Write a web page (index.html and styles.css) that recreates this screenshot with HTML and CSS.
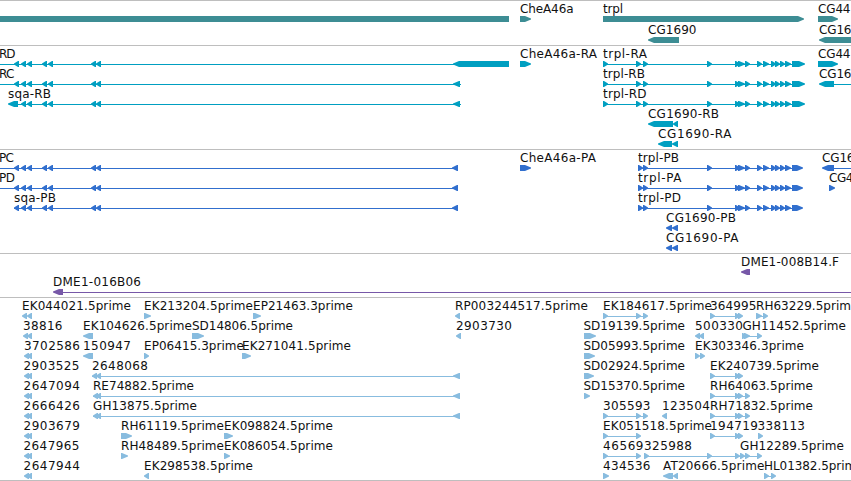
FILE: index.html
```html
<!DOCTYPE html>
<html lang="en">
<head>
  <meta charset="UTF-8">
  <meta name="viewport" content="width=device-width, initial-scale=1.0">
  <title>Genome Browser</title>
  <link rel="stylesheet" href="styles.css">
</head>
<body>
  <main class="browser">
    <section class="track genes"><svg id="genes"></svg></section>
    <section class="track transcripts"><svg id="transcripts"></svg></section>
    <section class="track proteins"><svg id="proteins"></svg></section>
    <section class="track clones"><svg id="clones"></svg></section>
    <section class="track ests"><svg id="ests"></svg></section>
  </main>
  <script src="tracks.js"></script>
</body>
</html>
```
FILE: styles.css
```css
* {
  box-sizing: border-box;
}

body {
  margin: 0;
  background: #fff;
  overflow: hidden;
}

.browser {
  display: flex;
  flex-direction: column;
  width: 851px;
  border-bottom: 1px solid #bebebe;
}

.track {
  border-top: 1px solid #bebebe;
}

.track svg {
  display: block;
  width: 100%;
  height: 100%;
  overflow: hidden;
}

.track text {
  font-family: "DejaVu Sans", sans-serif;
  font-size: 12px;
  fill: #111;
}

.track path,
.track rect {
  fill: currentColor;
}

.track rect {
  shape-rendering: crispEdges;
}

.genes {
  height: 45px;
  color: #3d8d94;
}

.transcripts {
  height: 104px;
  color: #009fc1;
}

.proteins {
  height: 104px;
  color: #316fce;
}

.clones {
  height: 44px;
  color: #7758a8;
}

.ests {
  height: 183px;
  color: #88bcdf;
}
```
FILE: tracks.js
```js
const SVG = 'http://www.w3.org/2000/svg';

// exons shared by several features
const sqaCds = [[21, 26], [27, 32], [42, 47], [48, 53], [91, 96], [96, 101]];
const trplTail = [[707, 712], [735, 740], [738, 745], [745, 750], [757, 762], [763, 769],
  [771, 776], [775, 780], [780, 785], [785, 791]];
const trplRna = [[603, 608], [636, 641], [643, 648], ...trplTail, [792, 805]];
const trplCds = [[638, 643], [643, 648], ...trplTail, [792, 803]];
const pair = [[24, 29], [27, 32]];
const estMid = [[710, 715], [735, 740], [738, 743]];

// [label, label start, label end, strand, exons, line start, line end]
const tracks = {
  genes: { pitch: 21, rows: [
    [
      ['', 0, 0, 0, [[0, 509]]],
      ['CheA46a', 520, 573, 1, [[520, 531]]],
      ['trpl', 603, 622.5, 1, [[603, 804]]],
      ['CG44', 818, 850, 1, [[818, 838]]]
    ],
    [
      ['CG1690', 648, 696, -1, [[648, 679]]],
      ['CG16', 819, 851, -1, [[819, 856]]]
    ]
  ] },
  transcripts: { pitch: 20, rows: [
    [
      ['RD', -1, 15, -1, [[14, 19], ...sqaCds, [453, 509]], 0, 460],
      ['CheA46a-RA', 520, 596.5, 1, [[520, 531]]],
      ['trpl-RA', 603, 646.5, 1, trplRna, 603, 800],
      ['CG44', 818, 850, 1, [[818, 838]]]
    ],
    [
      ['RC', -1, 14, -1, [[14, 19], ...sqaCds, [453, 460]], 0, 461],
      ['trpl-RB', 603, 644.5, 1, trplRna, 603, 800],
      ['CG16', 819, 851, -1, [[819, 834]], 830, 851]
    ],
    [
      ['sqa-RB', 8, 50.5, -1, [[8, 18], ...sqaCds, [453, 460]], 12, 461],
      ['trpl-RD', 603, 646, 1, trplRna, 603, 800]
    ],
    [['CG1690-RB', 648, 718.5, -1, [[648, 673], [673, 678]]]],
    [['CG1690-RA', 658, 731, -1, [[658, 672], [672, 678]]]]
  ] },
  proteins: { pitch: 20, rows: [
    [
      ['PC', -1, 13.5, -1, [[14, 19], ...sqaCds, [452, 458]], 0, 458],
      ['CheA46a-PA', 520, 595.5, 1, [[520, 531]]],
      ['trpl-PB', 638, 678.5, 1, trplCds, 638, 800],
      ['CG16', 822, 854, -1, [[822, 834]], 830, 851]
    ],
    [
      ['PD', -1, 14.5, -1, [[14, 19], ...sqaCds, [452, 458]], 0, 458],
      ['trpl-PA', 638, 681, 1, trplCds, 638, 800],
      ['CG4', 829, 853, 1, [[829, 835]]]
    ],
    [
      ['sqa-PB', 14, 55.5, -1, [[14, 19], ...sqaCds, [452, 458]], 14, 458],
      ['trpl-PD', 638, 680.5, 1, trplCds, 638, 800]
    ],
    [['CG1690-PB', 666, 735.5, -1, [[666, 672], [672, 678]]]],
    [['CG1690-PA', 666, 738, -1, [[666, 672], [672, 678]]]]
  ] },
  clones: { pitch: 20, rows: [
    [['DME1-008B14.F', 741, 838.5, -1, [[741, 750]]]],
    [['DME1-016B06', 53, 140.5, -1, [[53, 63]], 60, 851]]
  ] },
  ests: { pitch: 20, rows: [
    [
      ['EK044021.5prime', 22, 130.5, -1, [[22, 27], [27, 32]]],
      ['EK213204.5prime', 144, 252.5, 1, [[144, 151]]],
      ['EP21463.3prime', 253, 352.5, 1, [[253, 261]]],
      ['RP003244517.5prime', 455, 587.5, -1, [[455, 460]]],
      ['EK184617.5prime', 603, 711.5, 1, [[603, 608], [636, 641], [643, 648]], 603, 645],
      ['364995', 710, 756, 1, estMid, 710, 740],
      ['RH63229.5prime', 756, 858, 1, [[756, 762], [763, 768]], 756, 765]
    ],
    [
      ['38816', 23, 62, -1, [[23, 28], [27, 32]]],
      ['EK104626.5prime', 83, 191.5, -1, [[83, 93]]],
      ['SD14806.5prime', 192, 292.5, 1, [[192, 204]]],
      ['2903730', 456, 511.5, -1, [[456, 461]]],
      ['SD19139.5prime', 583.5, 684.5, 1, [[584, 596]]],
      ['500330', 695, 742.5, -1, [[695, 700], [699, 704]]],
      ['GH11452.5prime', 742.5, 845.5, 1, [[742, 747], [744, 750], [757, 762]], 742, 760]
    ],
    [
      ['3702586', 24, 79.5, -1, pair],
      ['150947', 83, 130.5, -1, [[83, 93]]],
      ['EP06415.3prime', 144, 243.5, 1, [[144, 149]]],
      ['EK271041.5prime', 242, 350.5, 1, [[242, 251]]],
      ['SD05993.5prime', 583.5, 684.5, 1, [[584, 595]]],
      ['EK303346.3prime', 695, 803.5, 1, [[695, 700], [700, 705]]]
    ],
    [
      ['2903525', 23.5, 79, -1, pair],
      ['2648068', 92, 147.5, -1, [[92, 97], [96, 101], [453, 460]], 92, 460],
      ['SD02924.5prime', 583.5, 684.5, 1, [[584, 594]]],
      ['EK240739.5prime', 710, 818.5, 1, estMid, 710, 740]
    ],
    [
      ['2647094', 23.5, 79.5, -1, pair],
      ['RE74882.5prime', 93, 193.5, -1, [[93, 98], [96, 101], [453, 460]], 93, 460],
      ['SD15370.5prime', 583.5, 684.5, 1, [[584, 590]]],
      ['RH64063.5prime', 710, 812.5, 1, [...estMid, [745, 750]], 710, 748]
    ],
    [
      ['2666426', 23.5, 79.5, -1, pair],
      ['GH13875.5prime', 93, 196.5, -1, [[93, 98], [96, 101], [453, 460]], 93, 460],
      ['305593', 603, 650, 1, [[603, 608], [636, 641], [643, 648]], 603, 645],
      ['123504', 662, 709.5, -1, [[662, 667]]],
      ['RH71832.5prime', 710, 812.5, 1, [...estMid, [745, 750]], 710, 748]
    ],
    [
      ['2903679', 23.5, 79.5, -1, pair],
      ['RH61119.5prime', 121, 223.5, 1, [[121, 132]]],
      ['EK098824.5prime', 224, 332.5, 1, [[224, 233]]],
      ['EK051518.5prime', 603, 711.5, 1, [[603, 608], [636, 641]], 603, 640],
      ['194719', 710, 757.5, 1, estMid, 710, 740],
      ['338113', 757.5, 804.5, 1, [[758, 763]]]
    ],
    [
      ['2647965', 23.5, 79, -1, pair],
      ['RH48489.5prime', 121, 223.5, 1, [[121, 128]]],
      ['EK086054.5prime', 224, 332.5, 1, [[224, 230]]],
      ['46569', 603, 643, 1, [[603, 608], [636, 641]], 603, 640],
      ['325988', 644, 691.5, 1, [[644, 649], [707, 712], [735, 740]], 644, 740],
      ['GH12289.5prime', 740, 843.5, 1, [[740, 745], [745, 750], [757, 762]], 740, 760]
    ],
    [
      ['2647944', 23.5, 79.5, -1, pair],
      ['EK298538.5prime', 144, 252.5, -1, [[144, 149]]],
      ['434536', 603, 650, 1, [[603, 609]]],
      ['AT20666.5prime', 663, 764, -1, [[663, 673], [673, 678]]],
      ['HL01382.5prime', 764, 863, 1, [[764, 769], [771, 776]], 764, 773]
    ]
  ] }
};

function add(parent, name, attrs) {
  const el = document.createElementNS(SVG, name);
  for (const key in attrs) el.setAttribute(key, attrs[key]);
  parent.appendChild(el);
  return el;
}

// block 6px high, with a point on the side the strand runs to
function exonPath(a, b, strand, y) {
  if (!strand) return `M${a} ${y}H${b}V${y + 6}H${a}Z`;
  const tip = strand > 0 ? b : a;
  const back = strand > 0 ? a : b;
  const neck = tip - strand * Math.min(6, b - a - 1);
  return `M${back} ${y}H${neck}L${tip} ${y + 2.5}V${y + 3.5}L${neck} ${y + 6}H${back}Z`;
}

for (const id in tracks) {
  const svg = document.getElementById(id);
  tracks[id].rows.forEach((row, i) => {
    const base = 12 + i * tracks[id].pitch;
    for (const [label, x, end, strand, exons, from, to] of row) {
      if (to) add(svg, 'rect', { x: from, y: base + 6, width: to - from, height: 1 });
      // one path per exon, neighbouring ones can overlap
      for (const [a, b] of exons) add(svg, 'path', { d: exonPath(a, b, strand, base + 3) });
      if (label) add(svg, 'text', { x: x, y: base, textLength: end - x + 0.5 }).textContent = label;
    }
  });
}
```
